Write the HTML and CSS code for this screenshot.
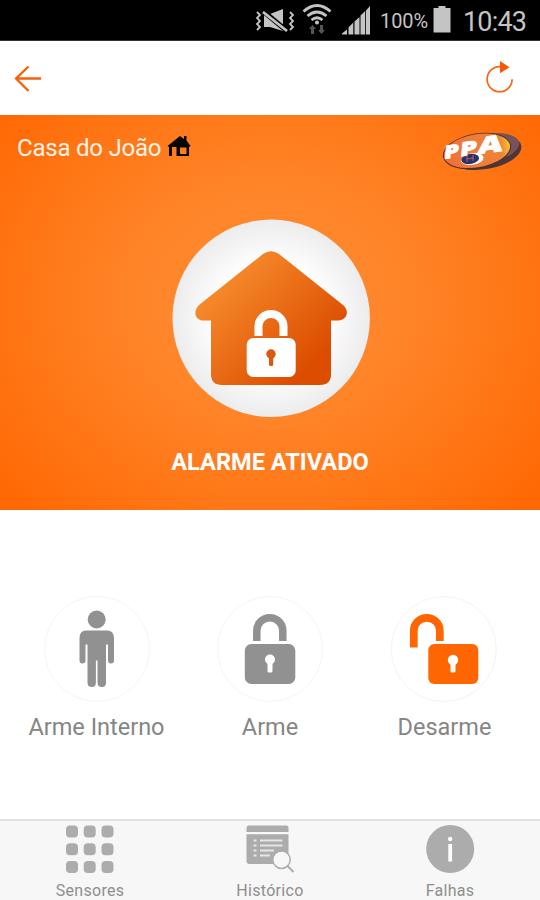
FILE: index.html
```html
<!DOCTYPE html>
<html lang="pt-BR">
<head>
<meta charset="utf-8">
<title>Casa do João</title>
<link rel="stylesheet" href="styles.css">
</head>
<body>
<div class="app">
  <div class="status">
    <svg class="mute" width="42" height="40" viewBox="254 0 42 40">
      <g fill="none" stroke="#c4c4c4" stroke-width="1.8">
        <path d="M257 12l3 3-3 3 3 3-3 3 3 3-3 3M290 12l3 3-3 3 3 3-3 3 3 3-3 3"/>
      </g>
      <path fill="#c4c4c4" d="M264 14h6l13-5v22l-13-4h-6z"/>
      <path d="M263 11l24 20" stroke="#000" stroke-width="5"/>
      <path d="M263 12l24 19" stroke="#c4c4c4" stroke-width="2.8"/>
    </svg>
    <svg class="wifi" width="30" height="40" viewBox="302 0 30 40">
      <g fill="none" stroke="#c4c4c4" stroke-width="2.8">
        <path d="M303.500 11.500q13.500-12 27 0M307.500 16q9.500-8 19 0M311.500 20q5.500-4.500 11 0"/>
      </g>
      <circle cx="317" cy="22.500" r="2" fill="#c4c4c4"/>
      <path fill="#555" d="M312.500 25l3.500 4h-2v5h-3v-5h-2zM321.500 34l3.500-4h-2v-5h-3v5h-2z"/>
    </svg>
    <svg class="signal" width="30" height="40" viewBox="341 0 30 40">
      <path fill="#c4c4c4" d="M342 34.500v-1l5-4v5zM348.500 34.500v-7l4.800-5v12zM354.500 34.500v-13l5-4.500v17.500zM360.500 34.500v-19l4.700-4.500v23.500zM366 34.500v-24l4-4.500v28.500z"/>
    </svg>
    <span class="percent">100%</span>
    <svg class="battery" width="18" height="40" viewBox="433 0 18 40"><path fill="#c4c4c4" d="M438.500 6h7v2h5v24.500h-17v-24.500h5z"/></svg>
    <span class="time">10:43</span>
  </div>
  <header class="toolbar">
    <svg width="30" height="30" viewBox="13 63 30 30"><path d="M28.500 66.500L16 78.500l12.500 12.500M16 78.500h25" fill="none" stroke="#f85f0a" stroke-width="2.300"/></svg>
    <svg width="30" height="34" viewBox="485 60 30 34"><path d="M502 65.700h-2.500a12.500 12.500 0 1 0 12.600 12.500" fill="none" stroke="#f4681c" stroke-width="1.700"/><path fill="#fb5603" d="M500 60l9.500 6.300-9.500 6z"/></svg>
  </header>
  <main class="hero">
    <div class="place">
      <div class="name"><span>Casa do João</span>
        <svg width="24" height="24" viewBox="167 134 24 24"><path fill="#080400" fill-rule="evenodd" d="M167.500 146l12.500-10 4 3v-3h2.500v4.500l4 5.500-1.500 1v9h-20v-9zM172 147v9h4.500v-9zM180 147.500v6.500h6.500v-6.500z"/></svg>
      </div>
      <svg class="logo" width="84" height="44" viewBox="440 129 84 44">
        <defs><linearGradient id="lg"><stop offset="0" stop-color="#f0703b"/><stop offset=".86" stop-color="#ed8535"/><stop offset="1" stop-color="#ffc331"/></linearGradient></defs>
        <g transform="rotate(-10 480 151)">
          <ellipse cx="485" cy="153" rx="36.500" ry="17" fill="#4f3537"/>
          <ellipse cx="486" cy="149.500" rx="34" ry="14.500" fill="#77525a"/>
          <ellipse cx="477" cy="150.500" rx="34.500" ry="17.500" fill="#49322d"/>
          <ellipse cx="477" cy="150.300" rx="33.500" ry="16.500" fill="url(#lg)"/>
        </g>
        <ellipse cx="472" cy="159" rx="11.500" ry="5.800" fill="#fff" transform="rotate(-8 472 158)"/>
        <ellipse cx="470" cy="159" rx="9" ry="5" fill="#263268" transform="rotate(-8 470 158)"/>
        <path d="M467 156v6M473 155v6M466 159l8-1" stroke="#c0555c" stroke-width="1.100"/>
        <g class="ppa">
          <text transform="translate(443.500 159) rotate(-8) skewX(-14) scale(1.32 1)" font-size="18">P</text>
          <text transform="translate(459.500 156.500) rotate(-8) skewX(-14) scale(1.42 1)" font-size="19">P</text>
          <text transform="translate(477 154.500) rotate(-8) skewX(-14) scale(1.5 1)" font-size="23">A</text>
        </g>
      </svg>
    </div>
    <svg class="emblem" width="200" height="200" viewBox="170 218 200 200">
      <defs>
        <radialGradient id="disc"><stop offset=".55" stop-color="#fff"/><stop offset="1" stop-color="#ececed"/></radialGradient>
        <linearGradient id="roof" gradientUnits="userSpaceOnUse" x1="227" y1="275" x2="315" y2="360"><stop offset="0" stop-color="#f68a2b"/><stop offset="1" stop-color="#dc4d00"/></linearGradient>
      </defs>
      <circle cx="271.200" cy="318.300" r="98.700" fill="url(#disc)"/>
      <path fill="url(#roof)" d="M263 254q8-5.500 16 0l64 51c7 6 4 15.500-5 15.500h-7V374q0 11-11 11h-98q-11 0-11-11V320.500h-7c-9 0-11.500-9-5-15.500z"/>
      <path d="M258.500 336v-10a12.500 12 0 0 1 25 0V336" fill="none" stroke="#fff" stroke-width="8"/>
      <rect x="246.700" y="338" width="49" height="39" rx="6.500" fill="#fff"/>
      <circle cx="271" cy="354" r="4.700" fill="#dc5710"/><rect x="269" y="354" width="4.200" height="12" rx="1.500" fill="#dc5710"/>
    </svg>
    <div class="state">ALARME ATIVADO</div>
  </main>
  <section class="actions">
    <div class="action">
      <svg width="108" height="108" viewBox="43 594.500 108 108"><circle cx="97" cy="648.500" r="52.500" fill="#fff" stroke="#f6f4f4"/>
        <g fill="#919191"><circle cx="96.700" cy="619" r="9"/><path d="M86 630h21q7 0 7 8v22q0 3-3 3t-3-3v-16h-2v38q0 4.500-4.200 4.500t-4.300-4.500v-22h-1.600v22q0 4.500-4.200 4.500t-4.200-4.500v-38h-2v16q0 3-3 3t-3-3v-22q0-8 6.500-8z"/></g></svg>
      <span>Arme Interno</span>
    </div>
    <div class="action">
      <svg width="108" height="108" viewBox="216.500 594.500 108 108"><circle cx="270.500" cy="648.500" r="52.500" fill="#fff" stroke="#f6f4f4"/>
        <path d="M257.300 640.500v-10.500a13 12.700 0 0 1 26 0v10.500" fill="none" stroke="#919191" stroke-width="7.500"/>
        <rect x="245.300" y="643.500" width="50.500" height="40" rx="6.500" fill="#919191"/><circle cx="270.500" cy="659" r="5" fill="#fff"/><rect x="268" y="660" width="5" height="12" rx="1.500" fill="#fff"/></svg>
      <span>Arme</span>
    </div>
    <div class="action">
      <svg width="108" height="108" viewBox="390 594.500 108 108"><circle cx="443.800" cy="648.500" r="52.500" fill="#fff" stroke="#fbf1ee"/>
        <path d="M413.800 647v-17a13 12.700 0 0 1 26 0v10.500" fill="none" stroke="#ff6500" stroke-width="7.700"/>
        <rect x="428.300" y="643.500" width="50" height="40" rx="6" fill="#ff6500"/><circle cx="453" cy="659.500" r="5.200" fill="#fff"/><rect x="450.500" y="660" width="5" height="12" rx="1.500" fill="#fff"/></svg>
      <span class="desarme">Desarme</span>
    </div>
  </section>
  <nav class="tabs">
    <div class="tab">
      <svg width="50" height="50" viewBox="65 824 50 50"><g fill="#acacac"><rect x="66" y="825.500" width="12" height="12" rx="4"/><rect x="83.700" y="825.500" width="12" height="12" rx="4"/><rect x="101.500" y="825.500" width="12" height="12" rx="4"/><rect x="66" y="843.300" width="12" height="12" rx="4"/><rect x="83.700" y="843.300" width="12" height="12" rx="4"/><rect x="101.500" y="843.300" width="12" height="12" rx="4"/><rect x="66" y="861" width="12" height="12" rx="4"/><rect x="83.700" y="861" width="12" height="12" rx="4"/><rect x="101.500" y="861" width="12" height="12" rx="4"/></g></svg>
      <span>Sensores</span>
    </div>
    <div class="tab">
      <svg width="50" height="50" viewBox="245 824 50 50"><path fill="#acacac" d="M246.500 832v-4q0-2.500 2.500-2.500h37q2.500 0 2.500 2.500v4zM246.500 834.300h42V864h-39q-3 0-3-3z"/>
        <path d="M253.500 840.500h3M253.500 845.500h3M253.500 850.500h3M253.500 855.500h3M260 840.500h22.500M260 845.500h22.500M260 850.500h14M260 855.500h10" stroke="#e6e6e6" stroke-width="2"/>
        <circle cx="281.500" cy="859.700" r="8.700" fill="#f7f7f7" stroke="#acacac" stroke-width="1.500"/><path d="M287.500 866l6 6" stroke="#acacac" stroke-width="2"/></svg>
      <span>Histórico</span>
    </div>
    <div class="tab">
      <svg width="50" height="50" viewBox="425.500 824 50 50"><circle cx="450.700" cy="849" r="24" fill="#acacac"/><circle cx="450.700" cy="839" r="2.200" fill="#fff"/><rect x="448.800" y="844" width="3.800" height="17.500" fill="#fff"/></svg>
      <span>Falhas</span>
    </div>
  </nav>
</div>
</body>
</html>
```
FILE: styles.css
```css
* { box-sizing: border-box; }
body { margin: 0; background: #fff; font-family: Roboto, sans-serif; }
svg { display: block; flex: none; }
.app { width: 540px; height: 900px; display: flex; flex-direction: column; overflow: hidden; }
.status { height: 41px; background: #000; border-bottom: 1px solid #333; display: flex; align-items: flex-start; justify-content: flex-end; padding-right: 13px; color: #c4c4c4; white-space: nowrap; }
.mute { margin-right: 6px; }
.wifi { margin-right: 9px; }
.signal { margin-right: 9px; }
.percent { width: 53px; font-size: 20px; line-height: 42px; letter-spacing: -.1px; }
.battery { margin-right: 12px; }
.time { width: 64px; font-size: 27px; line-height: 44px; letter-spacing: -.8px; }
.toolbar { height: 74px; padding: 0 25px 1px 13px; display: flex; align-items: center; justify-content: space-between; }
.hero { height: 395px; display: flex; flex-direction: column; align-items: center; background: radial-gradient(ellipse 350px 300px at 50% 47%, #ff8d31 0%, #ff8428 40%, #ff7413 75%, #ff6803 100%); color: #fff; }
.place { width: 540px; height: 103px; padding: 14px 16px 0 17px; display: flex; justify-content: space-between; align-items: flex-start; }
.name { display: flex; gap: 6px; padding-top: 5px; font-size: 24px; line-height: 28px; letter-spacing: -.22px; color: #fff3e8; }
.logo { overflow: visible; }
.ppa { font-family: "Open Sans", sans-serif; font-weight: 800; fill: #fff; stroke: #fff; stroke-width: .7px; }
.state { margin-top: 29.500px; font-size: 23.6px; line-height: 28px; font-weight: 700; }
.actions { height: 309px; padding: 84.5px 6px 0; display: grid; grid-template-columns: 181px 166px 181px; }
.action { display: flex; flex-direction: column; align-items: center; font-size: 23.5px; line-height: 28px; color: #858585; }
.action span { margin-top: 10px; }
.action .desarme { padding-left: 2px; }
.tabs { height: 81px; padding-top: 3px; background: #f7f7f7; border-top: 2px solid #e1e1e1; display: grid; grid-template-columns: repeat(3, 1fr); }
.tab { display: flex; flex-direction: column; align-items: center; font-size: 16px; line-height: 20px; color: #8e8e8e; }
.tab span { margin-top: 7px; letter-spacing: .3px; }
```
